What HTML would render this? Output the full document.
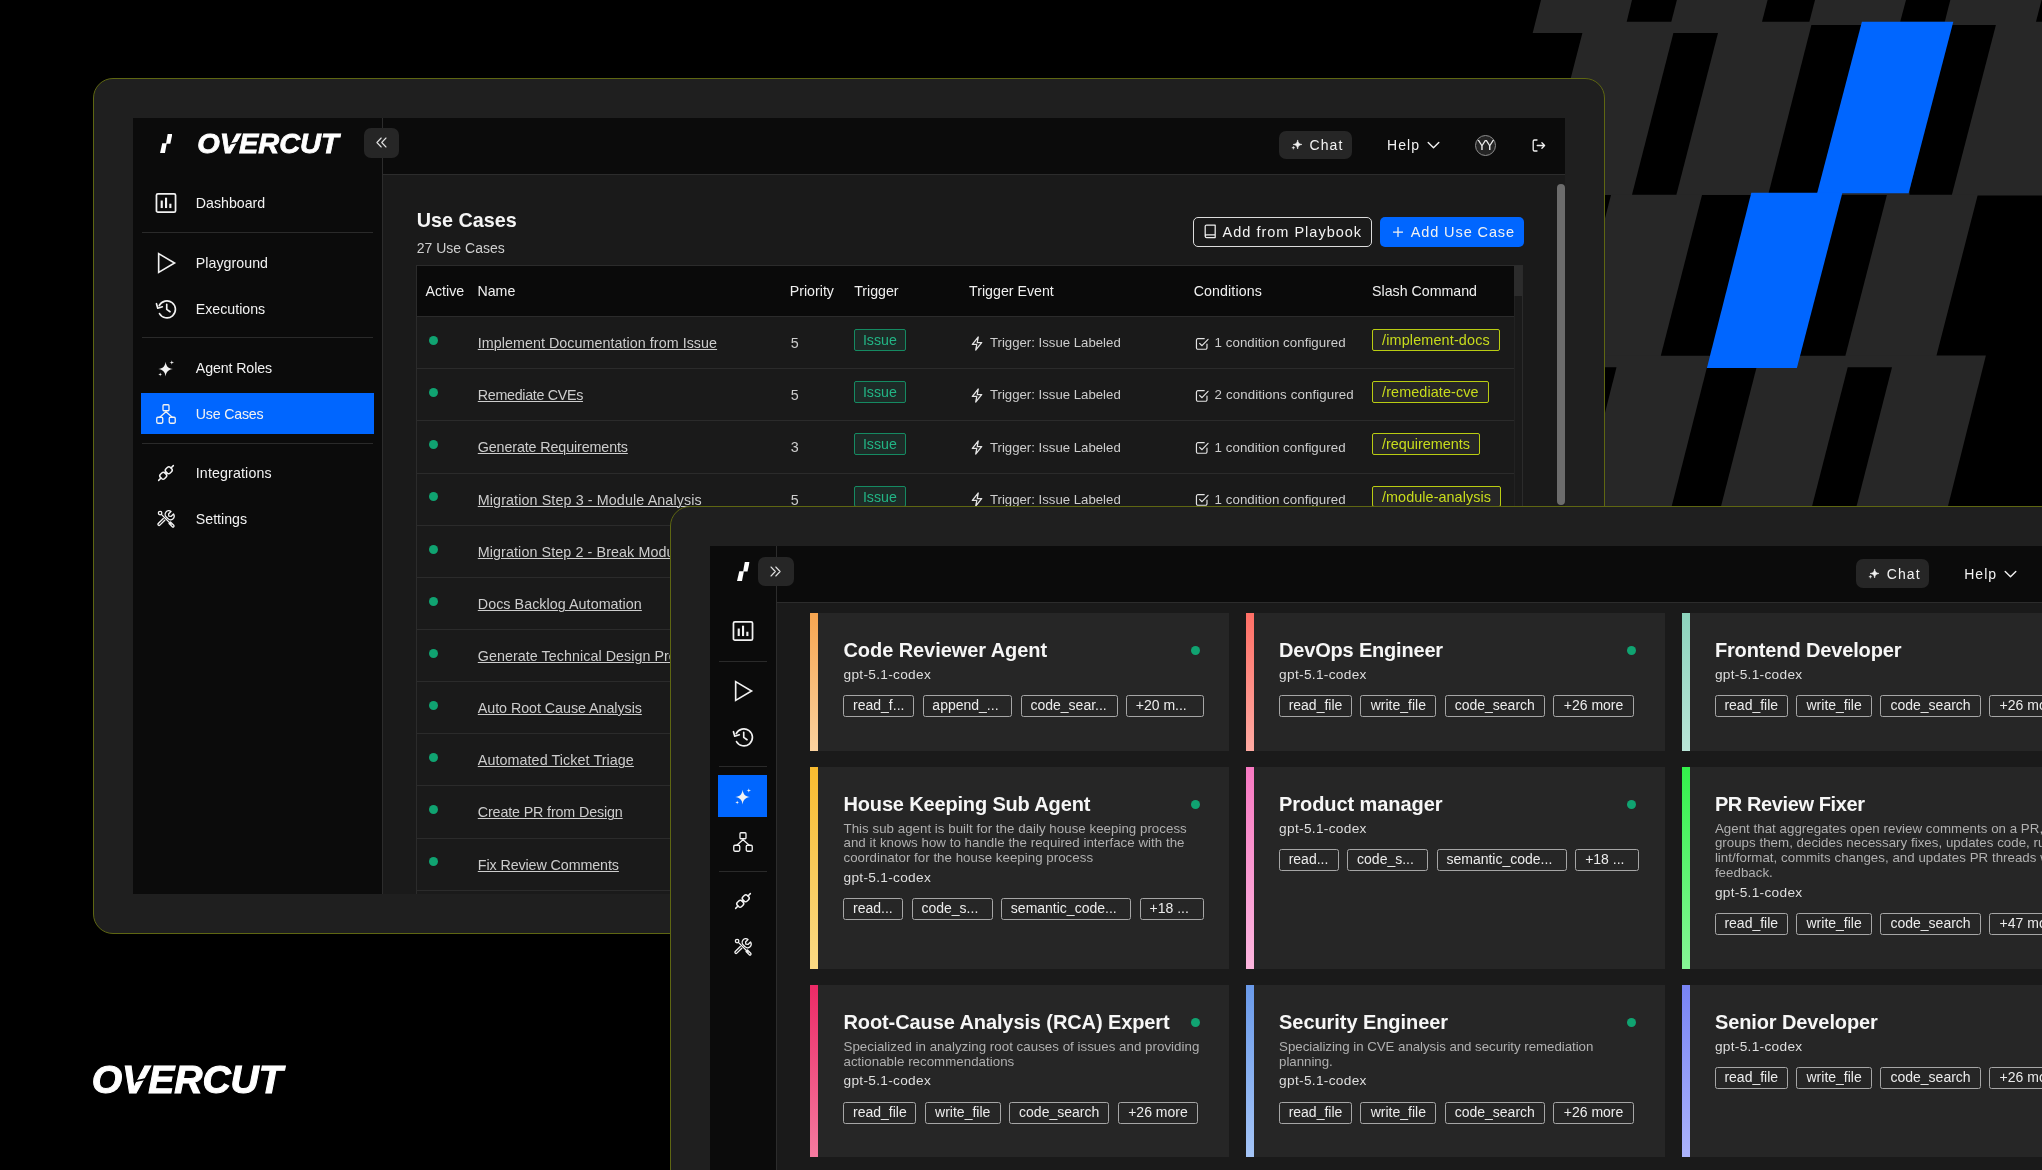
<!DOCTYPE html>
<html lang="en">
<head>
<meta charset="utf-8">
<title>Overcut</title>
<style>
*{box-sizing:border-box;margin:0;padding:0}
html,body{width:2042px;height:1170px;overflow:hidden;background:#000}
body{position:relative;font-family:"Liberation Sans",sans-serif;color:#fff;-webkit-font-smoothing:antialiased}
.abs{position:absolute}
#pattern{position:absolute;left:0;top:0;width:2042px;height:1170px}
.frame{position:absolute;background:#1f1f1f;border:1px solid #5e6612;border-radius:20px;will-change:transform}
#w1{left:93px;top:78px;width:1512px;height:856px}
#w2{left:670px;top:506px;width:1500px;height:760px}
.app{position:absolute;left:39px;top:39px;background:#1a1a1a;overflow:hidden}
#app1{width:1432px;height:776px}
#app2{width:1460px;height:720px}
.side{position:absolute;left:0;top:0;bottom:0;background:#0b0b0b;border-right:1px solid #2c2c2c}
.topbar{position:absolute;top:0;right:0;height:57px;background:#0b0b0b;border-bottom:1px solid #2c2c2c}
.nav{position:absolute;left:8px;height:41px;display:flex;align-items:center;font-size:14.2px;color:#f2f2f2}
.nav svg{position:absolute;left:13.6px;top:9.6px;width:22px;height:22px}
.nav span{position:absolute;left:54.4px;top:13px;line-height:17px;white-space:nowrap}
.nav.act{background:#0066ff}
.sep{position:absolute;left:8px;height:1px;background:#2a2a2a}
.tbtn{position:absolute;background:#262626;border-radius:7px}
.ico{fill:none;stroke:#f0f0f0;stroke-width:1.5;stroke-linecap:round;stroke-linejoin:round}

/* ---- window 1 main ---- */
.h1{position:absolute;font-weight:700;font-size:19.8px;line-height:24px;color:#f5f5f5;white-space:nowrap}
.sub{position:absolute;font-size:14px;line-height:18px;color:#cfcfcf;white-space:nowrap}
.btn{position:absolute;height:29.6px;border-radius:5px;font-size:14.5px;letter-spacing:1px;line-height:17px;color:#f2f2f2;white-space:nowrap}
.btn span{position:absolute;top:6.8px}
.tbl{position:absolute;left:33.100px;top:89.750px;width:1107.3px;height:700px;border:1px solid #2b2b2b;border-bottom:0}
.thead{position:absolute;left:0;top:0;width:1096.8px;height:50.3px;background:#0a0a0a}
.thead span{position:absolute;top:16.200px;font-size:14.2px;line-height:18px;color:#f0f0f0;white-space:nowrap}
.row{position:absolute;left:0;width:1096.8px;height:52.15px}
.rl{position:absolute;left:0;width:1096.8px;height:1px;background:#2b2b2b}
.row .dot{position:absolute;left:12.100px;top:19.400px;width:9px;height:9px;border-radius:50%;background:#10a371}
.row .nm{position:absolute;left:60.700px;top:16.600px;font-size:14.3px;line-height:20px;color:#cdcdcd;text-decoration:underline;text-decoration-thickness:1px;text-underline-offset:.8px;white-space:nowrap}
.row .pr{position:absolute;left:373.600px;top:16.600px;font-size:14.3px;line-height:20px;color:#cdcdcd}
.row .iss{position:absolute;left:436.800px;top:12.500px;width:52px;height:21.700px;border:1px solid #158a62;background:#1d2b27;border-radius:2px;color:#22b585;font-size:14.200px;line-height:20.600px;text-align:center}
.row .bolt{position:absolute;left:552.800px;top:19.300px;width:14px;height:15px}
.row .tr{position:absolute;left:572.900px;top:16.700px;font-size:13.2px;line-height:20px;color:#cdcdcd;white-space:nowrap}
.row .chk{position:absolute;left:777.800px;top:20.300px;width:14.4px;height:13.4px}
.row .cd{position:absolute;left:797.500px;top:16.800px;font-size:13.3px;line-height:20px;color:#cdcdcd;white-space:nowrap}
.row .sl{position:absolute;left:955px;top:12.500px;height:21.700px;border:1px solid #b9cc12;background:#262626;border-radius:2px;color:#c8dc1c;font-size:14.400px;line-height:20.400px;text-align:center;white-space:nowrap}

/* ---- window 2 cards ---- */
.card{position:absolute;width:419.2px;background:#262626}
.card .st{position:absolute;left:0;top:0;bottom:0;width:8.2px}
.card .tt{position:absolute;left:33.300px;top:25.200px;font-size:20px;font-weight:700;line-height:24px;color:#f6f6f6;white-space:nowrap}
.card .gd{position:absolute;left:381.300px;top:32.500px;width:9px;height:9px;border-radius:50%;background:#10a371}
.card .ds{position:absolute;left:33.300px;top:54.400px;font-size:13.3px;line-height:14.9px;color:#b0b0b0;white-space:nowrap;letter-spacing:.03px}
.card .md{position:absolute;left:33.300px;font-size:13.700px;line-height:18px;color:#dedede;white-space:nowrap;letter-spacing:.300px}
.card .tg{position:absolute;left:33.200px;height:22px;display:flex;gap:8.500px}
.card .tg span{display:block;height:22px;border:1px solid #a6a6a6;border-radius:2.500px;font-size:14px;line-height:19.800px;color:#ececec;text-align:center;white-space:nowrap;flex:none;overflow:hidden}
.card .tg span.l{text-align:left;padding-left:8.700px}
</style>
</head>
<body>

<svg width="0" height="0" style="position:absolute">
 <defs>
  <symbol id="i-dash" viewBox="0 0 24 24"><rect x="1.6" y="2" width="20.8" height="20" rx="1.6" fill="none" stroke="#f2f2f2" stroke-width="1.9"/><rect x="6.2" y="9.3" width="2.3" height="8.2" fill="#f2f2f2"/><rect x="10.9" y="6.2" width="2.3" height="11.3" fill="#f2f2f2"/><rect x="15.6" y="12.8" width="2.3" height="4.7" fill="#f2f2f2"/></symbol>
  <symbol id="i-play" viewBox="0 0 24 24"><path d="M4 1.8 L21.3 12 L4 22.2Z" fill="none" stroke="#f2f2f2" stroke-width="1.8" stroke-linejoin="miter"/></symbol>
  <symbol id="i-hist" viewBox="0 0 24 24"><g fill="none" stroke="#f2f2f2" stroke-width="1.8" stroke-linecap="round" stroke-linejoin="round"><path d="M4.6 8.4A9.3 9.3 0 1 1 4.9 17"/><path d="M1.6 6.2 3 11.2 8 9.6"/><path d="M12.8 6.8v5.6l3.6 2.6"/></g></symbol>
  <symbol id="i-spark" viewBox="-2.200 -2.600 28.400 28.400"><path d="M11.5 3.5C12.4 9.6 14.9 12.100 21 13C14.9 13.9 12.4 16.4 11.500 22.500C10.600 16.400 8.100 13.900 2 13C8.100 12.100 10.600 9.600 11.500 3.500Z" fill="#f2f2f2"/><path d="M19.5 1.500C19.800 3.700 20.300 4.200 22.500 4.500C20.300 4.800 19.800 5.300 19.500 7.500C19.200 5.300 18.700 4.800 16.500 4.500C18.700 4.200 19.200 3.700 19.500 1.500Z" fill="#f2f2f2"/><path d="M4.500 17.500C4.750 19.300 5.200 19.750 7 20C5.200 20.250 4.750 20.700 4.500 22.500C4.250 20.700 3.800 20.250 2 20C3.800 19.750 4.250 19.300 4.500 17.500Z" fill="#f2f2f2"/></symbol>
  <symbol id="i-tree" viewBox="-.5 -.5 25 25"><g fill="none" stroke="#f2f2f2" stroke-width="1.500" stroke-linejoin="round" stroke-linecap="round"><rect x="8.600" y="1.500" width="6.800" height="6.800" rx="1"/><rect x="1.500" y="15.700" width="6.800" height="6.800" rx="1.300"/><rect x="15.700" y="15.700" width="6.800" height="6.800" rx="1.300"/><path d="M4.900 15.600 12 9.400 19.100 15.600M12 8.400v1"/></g></symbol>
  <symbol id="i-plug" viewBox="-2.800 -2.800 29.600 29.600"><g fill="none" stroke="#f2f2f2" stroke-width="2" stroke-linecap="round" stroke-linejoin="round" transform="rotate(45 12 12)"><path d="M12 -2v4.500M12 21.500v4.500"/><rect x="8" y="2.500" width="8" height="8.500" rx="3"/><rect x="8" y="13" width="8" height="8.500" rx="3"/><path d="M10.500 11v2M13.500 11v2"/></g></symbol>
  <symbol id="i-tool" viewBox="-1.800 -1.800 27.600 27.600"><g fill="none" stroke="#f2f2f2" stroke-width="1.650" stroke-linecap="round" stroke-linejoin="round"><path d="M6.200 6.200 18.500 18.500"/><circle cx="4.600" cy="4.600" r="2.200"/><path d="M15.800 17.600 17.600 15.800 21.700 19.900A1.270 1.270 0 0 1 19.900 21.700Z"/><path d="M10.500 13.500 4.300 19.700A1.400 1.400 0 0 1 2.300 17.700L8.600 11.400"/><path d="M12.700 9.800A4.300 4.300 0 0 1 18.300 2.600L15.200 5.700 15.600 8.400 18.300 8.800 21.400 5.700A4.300 4.300 0 0 1 14.200 11.300Z"/></g></symbol>
  <symbol id="i-sparks" viewBox="0 0 24 24"><path d="M14 2C15 8.500 17 10.500 23.500 11.500C17 12.500 15 14.500 14 21C13 14.500 11 12.500 4.500 11.500C11 10.500 13 8.500 14 2Z" fill="#f2f2f2" stroke="#f2f2f2" stroke-width="1.200" stroke-linejoin="round"/><path d="M5 15C5.400 17.600 5.900 18.100 8.500 18.500C5.900 18.900 5.400 19.400 5 22C4.600 19.400 4.100 18.900 1.500 18.500C4.100 18.100 4.600 17.600 5 15Z" fill="#f2f2f2" stroke="#f2f2f2" stroke-width=".6"/></symbol>
  <symbol id="i-bolt" viewBox="0 0 14 15"><path d="M8.300 1 2.300 8.400H6.800L5.700 14 11.700 6.600H7.200Z" fill="none" stroke="#e4e4e4" stroke-width="1.250" stroke-linejoin="round"/></symbol>
  <symbol id="i-chk" viewBox="0 0 15 14"><path d="M12.500 7.300V11.300A1.500 1.500 0 0 1 11 12.800H3A1.500 1.500 0 0 1 1.500 11.300V3.300A1.500 1.500 0 0 1 3 1.800H9.600" fill="none" stroke="#e4e4e4" stroke-width="1.250" stroke-linecap="round"/><path d="M4.800 6.600 7.300 9.100 13.600 2.400" fill="none" stroke="#e4e4e4" stroke-width="1.250" stroke-linecap="round" stroke-linejoin="round"/></symbol>
  <symbol id="i-slash" viewBox="0 0 12.6 18.9" preserveAspectRatio="none"><path d="M7.800 0H12.600L10.500 9.500H6.100Z" fill="#fff"/><path d="M2.300 9.200H6.900L5 18.900H0Z" fill="#fff"/></symbol>
 </defs>
</svg>

<!-- background pattern -->
<svg id="pattern" viewBox="0 0 2042 1170">
  <g fill="#272727">
    <polygon points="1541,0 2042,0 2042,195.5 1540.5,195.5 1582.4,33 1532.7,33"/>
    <polygon points="1500,194.7 1977.8,194.7 1936.5,355.5 1936.5,356.300 1500,356.300"/>
    <polygon points="1500,355.5 1985.9,355.5 1943.5,524 1500,524"/>
  </g>
  <g fill="#000">
    <!-- row 0 -->
    <polygon points="1632,0 1676.9,0 1671.3,21.8 1626.7,21.8"/>
    <polygon points="1767.6,0 1815,0 1809.4,21.8 1762,21.8"/>
    <polygon points="1906,0 1950.3,0 1944.8,21.8 1900.2,21.8"/>
    <polygon points="2041.6,0 2042,0 2042,21.8 2036,21.8"/>
    <!-- row 1 -->
    <polygon points="1673.4,33.1 1718,33.1 1676.4,194.7 1632,194.7"/>
    <polygon points="1811.4,24.9 1870,24.9 1826,194.7 1768.2,194.7"/>
    <polygon points="1950,24.9 1995.9,24.9 1951.9,194.7 1909.500,194.7 1909.500,190 "/>
    <!-- row 2 -->
    <polygon points="1560,195 1611,195 1569.7,355.8 1520,355.8"/>
    <polygon points="1702,195 1760,195 1718.8,355.8 1660.8,355.8"/>
    <polygon points="1830,195 1886.9,195 1845.4,355.8 1789,355.8"/>
    <!-- row 3 -->
    <polygon points="1570,367.2 1616.5,367.2 1577,524 1530,524"/>
    <polygon points="1706.9,367.6 1756.5,367.6 1716.5,524 1667.2,524"/>
    <polygon points="1847.7,367.2 1892,367.2 1852,524 1807.5,524"/>
  </g>
  <g fill="#0066ff">
    <polygon points="1861.9,21.8 1953.3,21.8 1908.6,193.2 1817.1,193.2"/>
    <polygon points="1751.3,192.8 1842.4,192.8 1796.9,368 1706.9,368"/>
  </g>
</svg>

<!-- ============ WINDOW 1 ============ -->
<div class="frame" id="w1">
 <div class="app" id="app1">
  <div class="side" id="side1" style="width:250px">
   <svg class="abs" style="left:26.8px;top:15.6px;width:12.4px;height:19.2px"><use href="#i-slash"/></svg>
   <svg class="abs" style="left:60px;top:8px;width:160px;height:40px" viewBox="0 0 160 40"><text x="4.2" y="27" stroke="#fff" stroke-width=".8" font-family="Liberation Sans" font-weight="700" font-style="italic" font-size="28.4" fill="#fff" textLength="141.5" lengthAdjust="spacingAndGlyphs">OVERCUT</text><path d="M35.200 18.300 44.500 16.300" stroke="#0b0b0b" stroke-width="1.300" fill="none"/></svg>
   <div class="nav" style="top:64.4px;left:8.400px;width:232.200px"><svg><use href="#i-dash"/></svg><span style="letter-spacing:0px">Dashboard</span></div>
   <div class="nav" style="top:124.2px;left:8.400px;width:232.200px"><svg><use href="#i-play"/></svg><span style="letter-spacing:.05px">Playground</span></div>
   <div class="nav" style="top:170px;left:8.400px;width:232.200px"><svg><use href="#i-hist"/></svg><span style="letter-spacing:0px">Executions</span></div>
   <div class="nav" style="top:229.2px;left:8.400px;width:232.200px"><svg><use href="#i-spark"/></svg><span style="letter-spacing:-.1px">Agent Roles</span></div>
   <div class="nav act" style="top:275.3px;left:8.400px;width:232.200px"><svg><use href="#i-tree"/></svg><span style="letter-spacing:-.2px">Use Cases</span></div>
   <div class="nav" style="top:334px;left:8.400px;width:232.200px"><svg><use href="#i-plug"/></svg><span style="letter-spacing:.15px">Integrations</span></div>
   <div class="nav" style="top:380px;left:8.400px;width:232.200px"><svg><use href="#i-tool"/></svg><span style="letter-spacing:0px">Settings</span></div>
   <div class="sep" style="top:114.2px;left:8.5px;width:231.8px"></div>
   <div class="sep" style="top:219.2px;left:8.5px;width:231.8px"></div>
   <div class="sep" style="top:324.5px;left:8.5px;width:231.8px"></div>
  </div>
  <div class="topbar" id="top1" style="left:250px">
   <div class="tbtn" style="left:896.2px;top:12.6px;width:73px;height:28.2px"></div>
   <svg class="abs" style="left:907.5px;top:21.2px;width:11.400px;height:11.400px"><use href="#i-sparks"/></svg>
   <div class="abs" style="left:926.6px;top:18.100px;font-size:14px;letter-spacing:1.05px;line-height:18px;color:#f2f2f2">Chat</div>
   <div class="abs" style="left:1004px;top:18.100px;font-size:14px;letter-spacing:1.05px;line-height:18px;color:#f2f2f2">Help</div>
   <svg class="abs" style="left:1043.6px;top:23px;width:13px;height:9px" viewBox="0 0 13 9"><path d="M1.200 1.500 6.500 6.800 11.800 1.500" fill="none" stroke="#f2f2f2" stroke-width="1.400" stroke-linecap="round" stroke-linejoin="round"/></svg>

   <div class="abs" style="left:1092px;top:16.500px;width:21.400px;height:21.400px;border:1.200px solid #8d8d8d;background:#242424;border-radius:50%"></div>
   <div class="abs" style="left:1092px;top:19.300px;width:21.400px;text-align:center;font-size:14.200px;line-height:16px;letter-spacing:-1.500px;color:#eee;text-indent:-1.200px">YY</div>
   <svg class="abs" style="left:1149px;top:20.5px;width:14px;height:13px" viewBox="0 0 14 13"><g fill="none" stroke="#f2f2f2" stroke-width="1.300" stroke-linecap="round" stroke-linejoin="round"><path d="M5 1H2.500A1.300 1.300 0 0 0 1.200 2.300V10.700A1.300 1.300 0 0 0 2.500 12H5"/><path d="M5.200 6.500H12.600M9.900 3.800 12.600 6.500 9.900 9.200"/></g></svg>
  </div>
  <div id="main1" class="abs" style="left:250px;top:57px;right:0;bottom:0">
   <div class="h1" style="left:33.8px;top:32.9px;letter-spacing:-.02px">Use Cases</div>
   <div class="sub" style="left:33.8px;top:64.3px">27 Use Cases</div>
   <div class="btn" style="left:810px;top:42.3px;width:179px;border:1.5px solid #dcdcdc"><svg class="abs" style="left:10px;top:6px;width:12.4px;height:14.6px" viewBox="0 0 12.4 14.6"><g fill="none" stroke="#eee" stroke-width="1.250" stroke-linejoin="round" stroke-linecap="round"><path d="M1.200 12.200V2.400A1.400 1.400 0 0 1 2.600 1H11.200V11H2.600A1.400 1.400 0 0 0 1.200 12.300A1.400 1.400 0 0 0 2.600 13.600H11.200V11"/></g></svg><span style="left:28.600px;top:5.300px">Add from Playbook</span></div>
   <div class="btn" style="left:997.4px;top:42.3px;width:143.4px;background:#0066ff"><svg class="abs" style="left:12.800px;top:9.700px;width:10px;height:10px" viewBox="0 0 10 10"><path d="M5 .5V9.500M.5 5H9.500" stroke="#f2f2f2" stroke-width="1.250" stroke-linecap="round"/></svg><span style="left:30.300px;letter-spacing:.900px">Add Use Case</span></div>
   <div class="tbl">
    <div class="thead"><span style="left:8.4px">Active</span><span style="left:60.4px">Name</span><span style="left:372.7px">Priority</span><span style="left:437.1px">Trigger</span><span style="left:552px">Trigger Event</span><span style="left:776.600px;letter-spacing:.12px">Conditions</span><span style="left:955px">Slash Command</span></div>
    <div class="abs" style="left:1096.800px;top:0;width:1px;height:700px;background:#222"></div>
    <div class="abs" style="left:1096.800px;top:0;width:8.500px;height:30px;background:#2c2c2c"></div>
    <div class="rl" style="top:50.3px"></div>
    <div class="row" style="top:50.8px"><i class="dot"></i><span class="nm" style="letter-spacing:0.05px">Implement Documentation from Issue</span><span class="pr">5</span><span class="iss">Issue</span><svg class="bolt"><use href="#i-bolt"/></svg><span class="tr">Trigger: Issue Labeled</span><svg class="chk"><use href="#i-chk"/></svg><span class="cd" style="letter-spacing:0.04px">1 condition configured</span><span class="sl" style="width:127.7px;letter-spacing:0.15px">/implement-docs</span></div>
    <div class="rl" style="top:102.45px"></div>
    <div class="row" style="top:102.95px"><i class="dot"></i><span class="nm" style="letter-spacing:-0.32px">Remediate CVEs</span><span class="pr">5</span><span class="iss">Issue</span><svg class="bolt"><use href="#i-bolt"/></svg><span class="tr">Trigger: Issue Labeled</span><svg class="chk"><use href="#i-chk"/></svg><span class="cd" style="letter-spacing:0.11px">2 conditions configured</span><span class="sl" style="width:116.5px;letter-spacing:0.1px">/remediate-cve</span></div>
    <div class="rl" style="top:154.6px"></div>
    <div class="row" style="top:155.1px"><i class="dot"></i><span class="nm" style="letter-spacing:-0.12px">Generate Requirements</span><span class="pr">3</span><span class="iss">Issue</span><svg class="bolt"><use href="#i-bolt"/></svg><span class="tr">Trigger: Issue Labeled</span><svg class="chk"><use href="#i-chk"/></svg><span class="cd" style="letter-spacing:0.04px">1 condition configured</span><span class="sl" style="width:107.6px;letter-spacing:0px">/requirements</span></div>
    <div class="rl" style="top:206.75px"></div>
    <div class="row" style="top:207.25px"><i class="dot"></i><span class="nm" style="letter-spacing:0.115px">Migration Step 3 - Module Analysis</span><span class="pr">5</span><span class="iss">Issue</span><svg class="bolt"><use href="#i-bolt"/></svg><span class="tr">Trigger: Issue Labeled</span><svg class="chk"><use href="#i-chk"/></svg><span class="cd" style="letter-spacing:0.04px">1 condition configured</span><span class="sl" style="width:128.8px;letter-spacing:0.06px">/module-analysis</span></div>
    <div class="rl" style="top:258.9px"></div>
    <div class="row" style="top:259.4px"><i class="dot"></i><span class="nm" style="letter-spacing:0.1px">Migration Step 2 - Break Modules</span><span class="pr">5</span><span class="iss">Issue</span><svg class="bolt"><use href="#i-bolt"/></svg><span class="tr">Trigger: Issue Labeled</span><svg class="chk"><use href="#i-chk"/></svg><span class="cd" style="letter-spacing:0.04px">1 condition configured</span><span class="sl" style="width:118px;letter-spacing:0.1px">/break-modules</span></div>
    <div class="rl" style="top:311.05px"></div>
    <div class="row" style="top:311.55px"><i class="dot"></i><span class="nm" style="letter-spacing:0.05px">Docs Backlog Automation</span><span class="pr">5</span><span class="iss">Issue</span><svg class="bolt"><use href="#i-bolt"/></svg><span class="tr">Trigger: Issue Labeled</span><svg class="chk"><use href="#i-chk"/></svg><span class="cd" style="letter-spacing:0.04px">1 condition configured</span><span class="sl" style="width:110px;letter-spacing:0.1px">/docs-backlog</span></div>
    <div class="rl" style="top:363.2px"></div>
    <div class="row" style="top:363.7px"><i class="dot"></i><span class="nm" style="letter-spacing:0.05px">Generate Technical Design Proposal</span><span class="pr">5</span><span class="iss">Issue</span><svg class="bolt"><use href="#i-bolt"/></svg><span class="tr">Trigger: Issue Labeled</span><svg class="chk"><use href="#i-chk"/></svg><span class="cd" style="letter-spacing:0.04px">1 condition configured</span><span class="sl" style="width:104px;letter-spacing:0.1px">/tech-design</span></div>
    <div class="rl" style="top:415.35px"></div>
    <div class="row" style="top:415.85px"><i class="dot"></i><span class="nm" style="letter-spacing:-0.05px">Auto Root Cause Analysis</span><span class="pr">5</span><span class="iss">Issue</span><svg class="bolt"><use href="#i-bolt"/></svg><span class="tr">Trigger: Issue Labeled</span><svg class="chk"><use href="#i-chk"/></svg><span class="cd" style="letter-spacing:0.04px">1 condition configured</span><span class="sl" style="width:60px;letter-spacing:0.1px">/rca</span></div>
    <div class="rl" style="top:467.5px"></div>
    <div class="row" style="top:468.0px"><i class="dot"></i><span class="nm" style="letter-spacing:0.085px">Automated Ticket Triage</span><span class="pr">5</span><span class="iss">Issue</span><svg class="bolt"><use href="#i-bolt"/></svg><span class="tr">Trigger: Issue Labeled</span><svg class="chk"><use href="#i-chk"/></svg><span class="cd" style="letter-spacing:0.04px">1 condition configured</span><span class="sl" style="width:70px;letter-spacing:0.1px">/triage</span></div>
    <div class="rl" style="top:519.65px"></div>
    <div class="row" style="top:520.15px"><i class="dot"></i><span class="nm" style="letter-spacing:-0.14px">Create PR from Design</span><span class="pr">5</span><span class="iss">Issue</span><svg class="bolt"><use href="#i-bolt"/></svg><span class="tr">Trigger: Issue Labeled</span><svg class="chk"><use href="#i-chk"/></svg><span class="cd" style="letter-spacing:0.04px">1 condition configured</span><span class="sl" style="width:90px;letter-spacing:0.1px">/create-pr</span></div>
    <div class="rl" style="top:571.8px"></div>
    <div class="row" style="top:572.3px"><i class="dot"></i><span class="nm" style="letter-spacing:-0.1px">Fix Review Comments</span><span class="pr">5</span><span class="iss">Issue</span><svg class="bolt"><use href="#i-bolt"/></svg><span class="tr">Trigger: Issue Labeled</span><svg class="chk"><use href="#i-chk"/></svg><span class="cd" style="letter-spacing:0.04px">1 condition configured</span><span class="sl" style="width:96px;letter-spacing:0.1px">/fix-review</span></div>
    <div class="rl" style="top:623.95px"></div>
   </div>
   <div class="abs" style="left:1173.8px;top:9.2px;width:8px;height:321px;border-radius:4px;background:#6c6c6c"></div>
  </div>
  <div class="tbtn" style="left:231.1px;top:10.2px;width:35.3px;height:29.5px"><svg class="abs" style="left:12.400px;top:8.700px;width:11px;height:11px" viewBox="0 0 11 11"><path d="M5.200 1 .9 5.500 5.200 10M10 1 5.700 5.500 10 10" fill="none" stroke="#e0e0e0" stroke-width="1.100" stroke-linecap="round" stroke-linejoin="round"/></svg></div>
 </div>
</div>

<!-- ============ WINDOW 2 ============ -->
<div class="frame" id="w2">
 <div class="app" id="app2">
  <div class="side" id="side2" style="width:67px">
   <svg class="abs" style="left:27px;top:16.300px;width:12.600px;height:18.900px"><use href="#i-slash"/></svg>
   <div class="nav" style="top:64.9px;left:8.200px;width:49.100px"><svg style="left:13.700px"><use href="#i-dash"/></svg></div>
   <div class="nav" style="top:124.7px;left:8.200px;width:49.100px"><svg style="left:13.700px"><use href="#i-play"/></svg></div>
   <div class="nav" style="top:170.5px;left:8.200px;width:49.100px"><svg style="left:13.700px"><use href="#i-hist"/></svg></div>
   <div class="nav act" style="top:229.200px;left:8.200px;width:49.100px;height:41.600px"><svg style="left:13.700px"><use href="#i-spark"/></svg></div>
   <div class="nav" style="top:275.8px;left:8.200px;width:49.100px"><svg style="left:13.700px"><use href="#i-tree"/></svg></div>
   <div class="nav" style="top:334.5px;left:8.200px;width:49.100px"><svg style="left:13.700px"><use href="#i-plug"/></svg></div>
   <div class="nav" style="top:380.5px;left:8.200px;width:49.100px"><svg style="left:13.700px"><use href="#i-tool"/></svg></div>
   <div class="sep" style="top:115px;left:8.5px;width:48.8px"></div>
   <div class="sep" style="top:219.8px;left:8.5px;width:48.8px"></div>
   <div class="sep" style="top:325px;left:8.5px;width:48.8px"></div>
  </div>
  <div class="topbar" id="top2" style="left:67px">
   <div class="tbtn" style="left:1079.4px;top:13px;width:73px;height:28.6px"></div>
   <svg class="abs" style="left:1090.7px;top:21.7px;width:11.400px;height:11.400px"><use href="#i-sparks"/></svg>
   <div class="abs" style="left:1109.8px;top:18.500px;font-size:14px;letter-spacing:1.05px;line-height:18px;color:#f2f2f2">Chat</div>
   <div class="abs" style="left:1187.2px;top:18.500px;font-size:14px;letter-spacing:1.05px;line-height:18px;color:#f2f2f2">Help</div>
   <svg class="abs" style="left:1226.8px;top:23.5px;width:13px;height:9px" viewBox="0 0 13 9"><path d="M1.200 1.500 6.500 6.800 11.800 1.500" fill="none" stroke="#f2f2f2" stroke-width="1.400" stroke-linecap="round" stroke-linejoin="round"/></svg>
  </div>
  <div id="main2" class="abs" style="left:67px;top:57px;right:0;bottom:0">
<!--CARDS-->
   <div class="card" style="left:33.2px;top:10.0px;height:138.0px"><i class="st" style="background:linear-gradient(180deg,#f6a550,#fbd29f)"></i><div class="tt" style="letter-spacing:-0.07px">Code Reviewer Agent</div><i class="gd"></i><div class="md" style="top:52.85px">gpt-5.1-codex</div><div class="tg" style="top:82.2px"><span class="l" style="width:70.8px">read_f...</span><span class="l" style="width:89.6px">append_...</span><span class="l" style="width:96.8px">code_sear...</span><span class="l" style="width:78px">+20 m...</span></div></div>
   <div class="card" style="left:468.8px;top:10.0px;height:138.0px"><i class="st" style="background:linear-gradient(180deg,#ff6f66,#ffaaa2)"></i><div class="tt" style="letter-spacing:-0.19px">DevOps Engineer</div><i class="gd"></i><div class="md" style="top:52.85px">gpt-5.1-codex</div><div class="tg" style="top:82.2px"><span style="width:73px">read_file</span><span style="width:75.7px">write_file</span><span style="width:100.2px">code_search</span><span style="width:80.4px">+26 more</span></div></div>
   <div class="card" style="left:904.6px;top:10.0px;height:138.0px"><i class="st" style="background:linear-gradient(180deg,#8cd3bc,#b9e5d7)"></i><div class="tt" style="letter-spacing:-0.135px">Frontend Developer</div><div class="md" style="top:52.85px">gpt-5.1-codex</div><div class="tg" style="top:82.2px"><span style="width:73px">read_file</span><span style="width:75.7px">write_file</span><span style="width:100.2px">code_search</span><span style="width:80.4px">+26 more</span></div></div>
   <div class="card" style="left:33.2px;top:164.2px;height:201.9px"><i class="st" style="background:linear-gradient(180deg,#f8bb2f,#fada85)"></i><div class="tt" style="letter-spacing:-0.16px">House Keeping Sub Agent</div><i class="gd"></i><div class="ds">This sub agent is built for the daily house keeping process<br>and it knows how to handle the required interface with the<br>coordinator for the house keeping process</div><div class="md" style="top:101.95px">gpt-5.1-codex</div><div class="tg" style="top:131.2px"><span class="l" style="width:59.9px">read...</span><span class="l" style="width:80.9px">code_s...</span><span class="l" style="width:130.2px">semantic_code...</span><span class="l" style="width:63.7px">+18 ...</span></div></div>
   <div class="card" style="left:468.8px;top:164.2px;height:201.9px"><i class="st" style="background:linear-gradient(180deg,#f879c2,#fdb6df)"></i><div class="tt" style="letter-spacing:-0.08px">Product manager</div><i class="gd"></i><div class="md" style="top:52.85px">gpt-5.1-codex</div><div class="tg" style="top:82.2px"><span class="l" style="width:59.9px">read...</span><span class="l" style="width:80.9px">code_s...</span><span class="l" style="width:130.2px">semantic_code...</span><span class="l" style="width:63.7px">+18 ...</span></div></div>
   <div class="card" style="left:904.6px;top:164.2px;height:201.9px"><i class="st" style="background:linear-gradient(180deg,#33f04b,#86f696)"></i><div class="tt" style="letter-spacing:-0.4px">PR Review Fixer</div><div class="ds">Agent that aggregates open review comments on a PR,<br>groups them, decides necessary fixes, updates code, runs<br>lint/format, commits changes, and updates PR threads with<br>feedback.</div><div class="md" style="top:116.85px">gpt-5.1-codex</div><div class="tg" style="top:146.1px"><span style="width:73px">read_file</span><span style="width:75.7px">write_file</span><span style="width:100.2px">code_search</span><span style="width:80.4px">+47 more</span></div></div>
   <div class="card" style="left:33.2px;top:382.3px;height:172.0px"><i class="st" style="background:linear-gradient(180deg,#ec2a66,#f57ba0)"></i><div class="tt" style="letter-spacing:-0.1px">Root-Cause Analysis (RCA) Expert</div><i class="gd"></i><div class="ds">Specialized in analyzing root causes of issues and providing<br>actionable recommendations</div><div class="md" style="top:87.05px">gpt-5.1-codex</div><div class="tg" style="top:116.3px"><span style="width:73px">read_file</span><span style="width:75.7px">write_file</span><span style="width:100.2px">code_search</span><span style="width:80.4px">+26 more</span></div></div>
   <div class="card" style="left:468.8px;top:382.3px;height:172.0px"><i class="st" style="background:linear-gradient(180deg,#6a9aea,#a5c5f7)"></i><div class="tt" style="letter-spacing:-0.07px">Security Engineer</div><i class="gd"></i><div class="ds" style="letter-spacing:-.04px">Specializing in CVE analysis and security remediation<br>planning.</div><div class="md" style="top:87.05px">gpt-5.1-codex</div><div class="tg" style="top:116.3px"><span style="width:73px">read_file</span><span style="width:75.7px">write_file</span><span style="width:100.2px">code_search</span><span style="width:80.4px">+26 more</span></div></div>
   <div class="card" style="left:904.6px;top:382.3px;height:172.0px"><i class="st" style="background:linear-gradient(180deg,#7884f4,#acb3fb)"></i><div class="tt" style="letter-spacing:-0.1px">Senior Developer</div><div class="md" style="top:52.85px">gpt-5.1-codex</div><div class="tg" style="top:82.2px"><span style="width:73px">read_file</span><span style="width:75.7px">write_file</span><span style="width:100.2px">code_search</span><span style="width:80.4px">+26 more</span></div></div>
   <!--/CARDS-->
  </div>
  <div class="tbtn" style="left:48.1px;top:10.8px;width:35.5px;height:29.3px"><svg class="abs" style="left:12.400px;top:9.200px;width:11px;height:11px" viewBox="0 0 11 11"><path d="M1 1 5.300 5.500 1 10M5.800 1 10.100 5.500 5.800 10" fill="none" stroke="#e0e0e0" stroke-width="1.100" stroke-linecap="round" stroke-linejoin="round"/></svg></div>
 </div>
</div>

<!-- bottom-left logo -->
<svg class="abs" style="left:84.5px;top:1056px;width:210px;height:48px;will-change:transform" viewBox="0 0 210 48"><text x="6.700" y="37" font-family="Liberation Sans" font-weight="700" font-style="italic" font-size="38.300" fill="#fff" stroke="#fff" stroke-width="1" textLength="191" lengthAdjust="spacingAndGlyphs">OVERCUT</text><path d="M48.700 25.600 61.200 22.800" stroke="#000" stroke-width="1.700" fill="none"/></svg>

</body>
</html>
